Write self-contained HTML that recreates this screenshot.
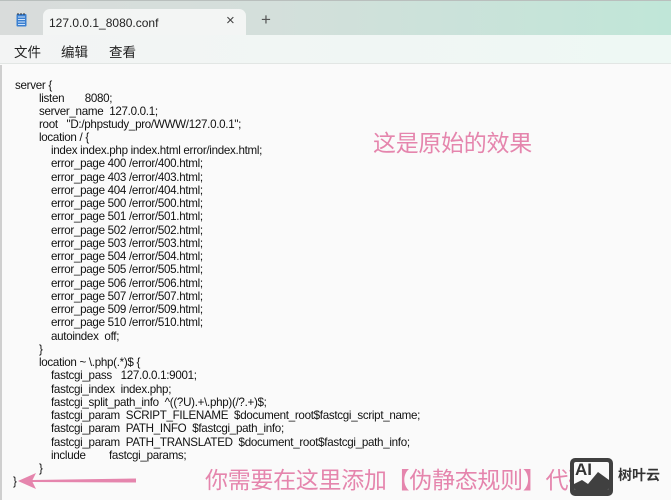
<!DOCTYPE html>
<html><head><meta charset="utf-8"><style>
*{margin:0;padding:0;box-sizing:border-box}
body{width:671px;height:500px;overflow:hidden;background:#fafafa;position:relative;font-family:"Liberation Sans","Noto Sans CJK SC",sans-serif}
.tb{position:absolute;left:0;top:0;width:671px;height:35px;background:linear-gradient(90deg,#d9dcdb 0%,#d4dfdb 40%,#c0e6d8 100%);border-top:1px solid #b9bfbd}
.tab{position:absolute;left:43px;top:9px;width:203px;height:27px;background:#f3f5f4;border-radius:7px 7px 0 0;font-size:12px;color:#222}
.menu{position:absolute;left:0;top:35px;width:671px;height:29px;background:linear-gradient(90deg,#f3f4f4,#eef8f4);border-bottom:1px solid #e2e6e4;font-size:13.5px;color:#222}
.ed{position:absolute;left:0;top:65px;width:671px;height:435px;background:#fafafa;border-left:2px solid #cfcfcf}
.ln{position:absolute;font-size:11.6px;letter-spacing:-0.3px;color:#111;white-space:pre;line-height:13px}
.pk{position:absolute;color:#e585ad;font-size:23px;white-space:nowrap;font-family:"Noto Sans CJK SC",sans-serif;letter-spacing:-0.3px}
</style></head><body>
<div class="tb"></div>
<svg style="position:absolute;left:16px;top:13px" width="11" height="14"><rect x="0.5" y="1" width="10" height="12.5" fill="#3a7fd0" rx="1"/><path d="M2 4h7M2 6.5h7M2 9h7M2 11.5h7" stroke="#cfe3fa" stroke-width="1"/><path d="M2 0v2M5 0v2M8 0v2" stroke="#333"/></svg>
<div class="tab"><span style="position:absolute;left:6px;top:7px">127.0.0.1_8080.conf</span><span style="position:absolute;left:183px;top:3px;font-size:15px;color:#444">×</span></div>
<span style="position:absolute;left:261px;top:10px;font-size:17px;color:#555">+</span>
<div class="menu"><span style="position:absolute;left:14px;top:6px">文件</span><span style="position:absolute;left:61px;top:6px">编辑</span><span style="position:absolute;left:109px;top:6px">查看</span></div>
<div class="ed"></div>
<div class="ln" style="left:15px;top:79px">server {</div>
<div class="ln" style="left:39px;top:92px">listen       8080;</div>
<div class="ln" style="left:39px;top:105px">server_name  127.0.0.1;</div>
<div class="ln" style="left:39px;top:118px">root   "D:/phpstudy_pro/WWW/127.0.0.1";</div>
<div class="ln" style="left:39px;top:131px">location / {</div>
<div class="ln" style="left:51px;top:144px">index index.php index.html error/index.html;</div>
<div class="ln" style="left:51px;top:157px">error_page 400 /error/400.html;</div>
<div class="ln" style="left:51px;top:171px">error_page 403 /error/403.html;</div>
<div class="ln" style="left:51px;top:184px">error_page 404 /error/404.html;</div>
<div class="ln" style="left:51px;top:197px">error_page 500 /error/500.html;</div>
<div class="ln" style="left:51px;top:210px">error_page 501 /error/501.html;</div>
<div class="ln" style="left:51px;top:224px">error_page 502 /error/502.html;</div>
<div class="ln" style="left:51px;top:237px">error_page 503 /error/503.html;</div>
<div class="ln" style="left:51px;top:250px">error_page 504 /error/504.html;</div>
<div class="ln" style="left:51px;top:263px">error_page 505 /error/505.html;</div>
<div class="ln" style="left:51px;top:277px">error_page 506 /error/506.html;</div>
<div class="ln" style="left:51px;top:290px">error_page 507 /error/507.html;</div>
<div class="ln" style="left:51px;top:303px">error_page 509 /error/509.html;</div>
<div class="ln" style="left:51px;top:316px">error_page 510 /error/510.html;</div>
<div class="ln" style="left:51px;top:330px">autoindex  off;</div>
<div class="ln" style="left:39px;top:343px">}</div>
<div class="ln" style="left:39px;top:356px">location ~ \.php(.*)$ {</div>
<div class="ln" style="left:51px;top:369px">fastcgi_pass   127.0.0.1:9001;</div>
<div class="ln" style="left:51px;top:383px">fastcgi_index  index.php;</div>
<div class="ln" style="left:51px;top:396px">fastcgi_split_path_info  ^((?U).+\.php)(/?.+)$;</div>
<div class="ln" style="left:51px;top:409px">fastcgi_param  SCRIPT_FILENAME  $document_root$fastcgi_script_name;</div>
<div class="ln" style="left:51px;top:422px">fastcgi_param  PATH_INFO  $fastcgi_path_info;</div>
<div class="ln" style="left:51px;top:436px">fastcgi_param  PATH_TRANSLATED  $document_root$fastcgi_path_info;</div>
<div class="ln" style="left:51px;top:449px">include        fastcgi_params;</div>
<div class="ln" style="left:39px;top:462px">}</div>
<div class="ln" style="left:13px;top:475px">}</div>
<div class="pk" style="left:373px;top:124px">这是原始的效果</div>
<div class="pk" style="left:205px;top:461px">你需要在这里添加【伪静态规则】代码</div>
<svg style="position:absolute;left:18px;top:472px" width="120" height="18"><path d="M14 8L118 6.5L118 10.5L14 10Z" fill="#e585ad"/><path d="M0 9L18 1L14 9L18 17Z" fill="#e585ad"/></svg>
<div style="position:absolute;left:570px;top:458px;width:43px;height:38px;background:#404040;border-radius:5px"></div>
<div style="position:absolute;left:574px;top:462px;width:35px;height:28px;background:#fafafa;border-radius:2px;overflow:hidden"><span style="position:absolute;left:1px;top:-2px;font-size:17px;font-weight:bold;color:#333">AI</span><svg style="position:absolute;left:0;top:0" width="35" height="28"><path d="M0 28L0 22L8 18L14 22L24 10L35 18L35 28Z" fill="#404040"/></svg></div>
<div style="position:absolute;left:618px;top:465px;font-size:14px;font-weight:bold;color:#333;font-family:'Noto Sans CJK SC',sans-serif">树叶云</div>
</body></html>
